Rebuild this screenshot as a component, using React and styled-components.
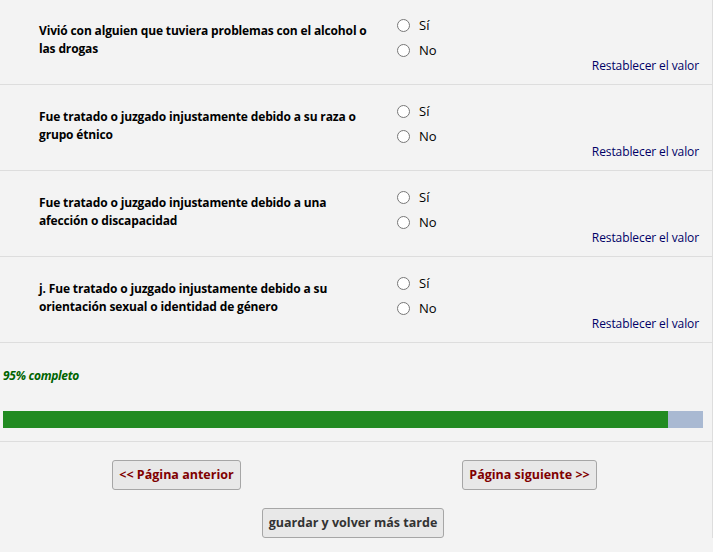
import React from "react";
import styled, { createGlobalStyle } from "styled-components";

const Global = createGlobalStyle`
  html, body { margin: 0; padding: 0; background: #f3f3f3; }
  body { font-family: "Open Sans", "Liberation Sans", sans-serif; color: #000; overflow: hidden; }
`;

const Page = styled.div`
  width: 713px;
  box-sizing: border-box;
  border-right: 1px solid #dddddd;
  margin-top: -1px;
  background: #f3f3f3;
`;

const Row = styled.div`
  display: flex;
  height: 86px;
  box-sizing: border-box;
  border-bottom: 1px solid #dddddd;
`;

const Question = styled.div`
  width: 337px;
  padding: 23px 16px 0 39px;
  font-size: 12px;
  font-weight: 700;
  line-height: 18px;
  letter-spacing: -0.15px;
  color: #000;
`;

const Answers = styled.div`
  flex: 1;
  display: flex;
  flex-direction: column;
  padding: 16px 13px 0 0;
`;

const Option = styled.label`
  display: flex;
  align-items: center;
  height: 20px;
  margin-bottom: ${(p) => (p.$last ? "0" : "5px")};
  font-size: 13px;
  color: #000;
`;

const Radio = styled.input`
  width: 13px;
  height: 13px;
  margin: 0 9px 0 5px;
`;

const Reset = styled.a`
  align-self: flex-end;
  font-size: 12px;
  line-height: 12px;
  color: #000066;
  text-decoration: none;
  letter-spacing: -0.1px;
`;

const ProgressSection = styled.div`
  padding: 25px 9px 13px 3px;
  border-bottom: 1px solid #dddddd;
`;

const ProgressText = styled.div`
  font-size: 12px;
  font-weight: 700;
  font-style: italic;
  line-height: 15px;
  color: #006400;
  letter-spacing: -0.3px;
  margin-bottom: 28px;
`;

const Bar = styled.div`
  width: 700px;
  height: 17px;
  background: #a9b9d2;
  display: flex;
`;

const Fill = styled.div`
  height: 100%;
  background: #228b22;
`;

const Nav = styled.div`
  width: 706px;
  display: grid;
  grid-template-columns: 1fr 1fr;
  padding-top: 18px;
  justify-items: center;
`;

const Button = styled.button`
  font-family: "Open Sans", "Liberation Sans", sans-serif;
  font-size: 12.5px;
  font-weight: 700;
  line-height: 18px;
  padding: 5px 6px;
  background: #e8e8e8;
  border: 1px solid #a6a6a6;
  border-radius: 3px;
  color: ${(p) => (p.$nav ? "#800000" : "#333333")};
  cursor: pointer;
`;

const SaveRow = styled.div`
  width: 706px;
  display: flex;
  justify-content: center;
  padding-top: 18px;
`;

const items = [
  "Vivió con alguien que tuviera problemas con el alcohol o las drogas",
  "Fue tratado o juzgado injustamente debido a su raza o grupo étnico",
  "Fue tratado o juzgado injustamente debido a una afección o discapacidad",
  "j. Fue tratado o juzgado injustamente debido a su orientación sexual o identidad de género",
];

export default function App() {
  const pct = 95;
  return (
    <>
      <Global />
      <Page>
        {items.map((q, i) => (
          <Row key={i}>
            <Question>{q}</Question>
            <Answers>
              <Option>
                <Radio type="radio" name={`q${i}`} />
                Sí
              </Option>
              <Option $last>
                <Radio type="radio" name={`q${i}`} />
                No
              </Option>
              <Reset href="#">Restablecer el valor</Reset>
            </Answers>
          </Row>
        ))}
        <ProgressSection>
          <ProgressText>{pct}% completo</ProgressText>
          <Bar>
            <Fill style={{ width: `${pct}%` }} />
          </Bar>
        </ProgressSection>
        <Nav>
          <Button $nav>&lt;&lt; Página anterior</Button>
          <Button $nav>Página siguiente &gt;&gt;</Button>
        </Nav>
        <SaveRow>
          <Button>guardar y volver más tarde</Button>
        </SaveRow>
      </Page>
    </>
  );
}
